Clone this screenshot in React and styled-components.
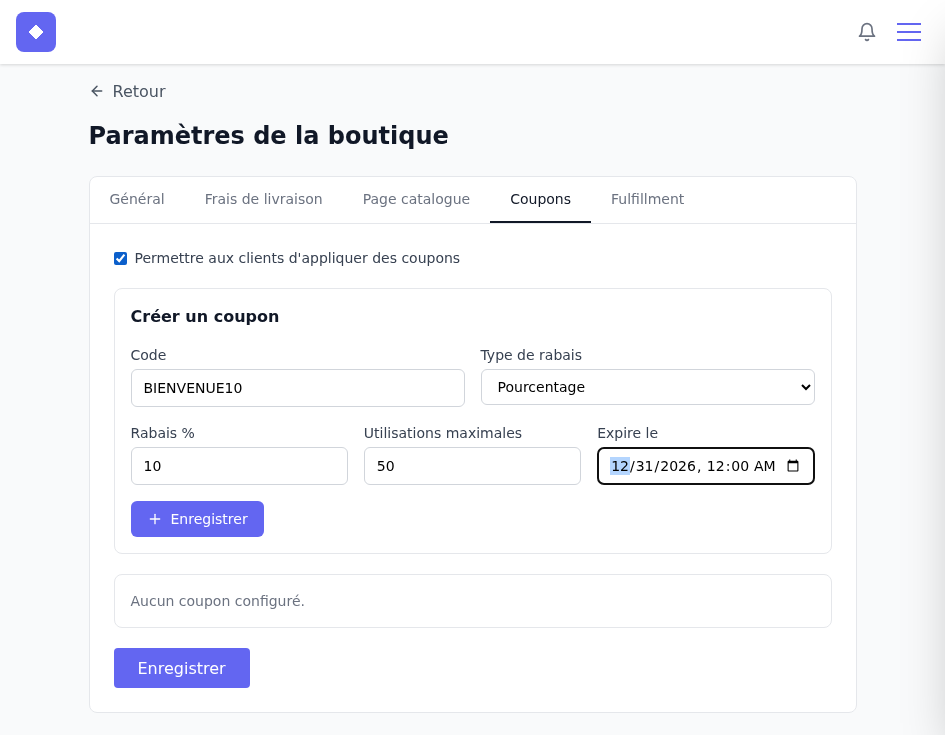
import React, { useState } from 'react';
import styled, { createGlobalStyle } from 'styled-components';
import { ArrowLeft, Plus } from 'lucide-react';
import { FiBell } from 'react-icons/fi';

const GlobalStyle = createGlobalStyle`
    * {
        box-sizing: border-box;
    }

    body {
        margin: 0;
        background: #f9fafb;
        color: #111827;
        font-family: "DejaVu Sans", sans-serif;
        overflow: hidden;
    }
`;

const TopBar = styled.header`
    height: 64px;
    padding: 12px 24px 12px 16px;
    display: flex;
    align-items: center;
    justify-content: space-between;
    background: #fff;
    box-shadow: 0 1px 3px rgba(0, 0, 0, 0.15);
`;

const Logo = styled.div`
    width: 40px;
    height: 40px;
    border-radius: 8px;
    background: #6366f1;
    display: flex;
    align-items: center;
    justify-content: center;
`;

const TopActions = styled.div`
    display: flex;
    align-items: center;
    gap: 20px;
    color: #6b7280;
`;

const Burger = styled.div`
    width: 24px;
    display: flex;
    flex-direction: column;
    gap: 6px;

    & > span {
        height: 2px;
        background: #6366f1;
    }
`;

// closed side drawer, only its shadow reaches the page
const DrawerShadow = styled.div`
    position: fixed;
    top: 0;
    right: -320px;
    z-index: 10;
    width: 320px;
    height: 100%;
    box-shadow: 0 25px 50px -12px rgba(0, 0, 0, 0.25);
`;

// own layer, text gets plain greyscale smoothing
const Page = styled.div`
    will-change: transform;
`;

const Main = styled.main`
    width: 768px;
    margin-left: 88.5px;
`;

const BackLink = styled.a`
    padding-top: 15px;
    height: 39px;
    display: flex;
    align-items: center;
    gap: 8px;
    font-size: 16px;
    color: #4b5563;
`;

const Title = styled.h1`
    margin: 17px 0 24px;
    font-size: 24px;
    line-height: 32px;
    font-weight: 700;
    color: #111827;
`;

const Card = styled.section`
    background: #fff;
    border: 1px solid #e5e7eb;
    border-radius: 8px;
`;

const Tabs = styled.nav`
    display: flex;
    height: 47px;
    border-bottom: 1px solid #e5e7eb;
`;

const Tab = styled.div`
    padding: 0 20px;
    height: 46px;
    display: flex;
    align-items: center;
    font-size: 14px;
    color: ${props => (props.$active ? '#111827' : '#6b7280')};
    border-bottom: 2px solid ${props => (props.$active ? '#111827' : 'transparent')};
`;

const CardBody = styled.div`
    padding: 24px;
`;

const CheckRow = styled.label`
    height: 20px;
    display: flex;
    align-items: center;
    gap: 8px;
    font-size: 14px;
    color: #374151;

    & > input {
        width: 13px;
        height: 13px;
        margin: 0;
        accent-color: #0b5fcb;
    }
`;

const Panel = styled.div`
    margin-top: 20px;
    padding: 16px;
    background: #fff;
    border: 1px solid #e5e7eb;
    border-radius: 8px;
`;

const PanelTitle = styled.h2`
    margin: 0 0 16px;
    font-size: 16px;
    line-height: 24px;
    font-weight: 700;
    color: #111827;
`;

const FormGrid = styled.div`
    display: grid;
    grid-template-columns: repeat(${props => props.$cols}, 1fr);
    gap: 16px;
    margin-bottom: 16px;
`;

const Field = styled.div`
    display: flex;
    flex-direction: column;
    align-items: stretch;
    min-width: 0;
`;

const Label = styled.label`
    margin-bottom: 4px;
    font-size: 14px;
    line-height: 20px;
    color: #374151;
`;

const Input = styled.input`
    width: 100%;
    height: 38px;
    padding: 0 12px;
    background: #fff;
    border: 1px solid #d1d5db;
    border-radius: 6px;
    font-family: inherit;
    font-size: 14px;
    color: #000;
`;

const DateInput = styled(Input)`
    width: calc(100% + 0.1px);

    &:focus::-webkit-datetime-edit-month-field {
        background: #b4d5fe;
        color: #000;
    }
`;

const Select = styled.select`
    width: 100%;
    height: 36px;
    padding: 0 12px;
    background: #fff;
    border: 1px solid #d1d5db;
    border-radius: 6px;
    font-family: inherit;
    font-size: 14px;
    color: #000;
`;

const Button = styled.button`
    display: inline-flex;
    align-items: center;
    justify-content: center;
    gap: 8px;
    height: ${props => (props.$large ? '40px' : '36px')};
    padding: 0 ${props => (props.$large ? '24px' : '16px')};
    background: #6366f1;
    color: #fff;
    border: 0;
    border-radius: ${props => (props.$large ? '4px' : '6px')};
    font-family: inherit;
    font-size: ${props => (props.$large ? '16px' : '14px')};
`;

const EmptyText = styled.p`
    margin: 0;
    font-size: 14px;
    line-height: 20px;
    color: #6b7280;
`;

const Footer = styled.div`
    margin-top: 20px;
`;

const tabs = ['Général', 'Frais de livraison', 'Page catalogue', 'Coupons', 'Fulfillment'];

export default function App() {
    const [code, setCode] = useState('BIENVENUE10');
    const [discount, setDiscount] = useState('10');
    const [maxUses, setMaxUses] = useState('50');
    const [expires, setExpires] = useState('2026-12-31T00:00');

    return (
        <>
            <GlobalStyle />
            <DrawerShadow />
            <Page>
                <TopBar>
                    <Logo>
                        <svg width="18" height="18" viewBox="0 0 18 18">
                            <path d="M9 2 L16 9 L9 16 L2 9 Z" fill="#fff" stroke="#fff" strokeWidth="1" strokeLinejoin="round" />
                        </svg>
                    </Logo>
                    <TopActions>
                        <FiBell size={20} />
                        <Burger>
                            <span />
                            <span />
                            <span />
                        </Burger>
                    </TopActions>
                </TopBar>
                <Main>
                    <BackLink>
                        <ArrowLeft size={16} strokeWidth={2.25} />
                        Retour
                    </BackLink>
                    <Title>Paramètres de la boutique</Title>
                    <Card>
                        <Tabs>
                            {tabs.map(tab => (
                                <Tab key={tab} $active={tab === 'Coupons'}>
                                    {tab}
                                </Tab>
                            ))}
                        </Tabs>
                        <CardBody>
                            <CheckRow>
                                <input type="checkbox" defaultChecked />
                                Permettre aux clients d'appliquer des coupons
                            </CheckRow>
                            <Panel>
                                <PanelTitle>Créer un coupon</PanelTitle>
                                <FormGrid $cols={2}>
                                    <Field>
                                        <Label>Code</Label>
                                        <Input value={code} onChange={e => setCode(e.target.value)} />
                                    </Field>
                                    <Field>
                                        <Label>Type de rabais</Label>
                                        <Select defaultValue="percent">
                                            <option value="percent">Pourcentage</option>
                                            <option value="fixed">Montant fixe</option>
                                        </Select>
                                    </Field>
                                </FormGrid>
                                <FormGrid $cols={3}>
                                    <Field>
                                        <Label>Rabais %</Label>
                                        <Input value={discount} onChange={e => setDiscount(e.target.value)} />
                                    </Field>
                                    <Field>
                                        <Label>Utilisations maximales</Label>
                                        <Input value={maxUses} onChange={e => setMaxUses(e.target.value)} />
                                    </Field>
                                    <Field>
                                        <Label>Expire le</Label>
                                        <DateInput
                                            type="datetime-local"
                                            autoFocus
                                            value={expires}
                                            onChange={e => setExpires(e.target.value)}
                                        />
                                    </Field>
                                </FormGrid>
                                <Button>
                                    <Plus size={16} />
                                    Enregistrer
                                </Button>
                            </Panel>
                            <Panel>
                                <EmptyText>Aucun coupon configuré.</EmptyText>
                            </Panel>
                            <Footer>
                                <Button $large>Enregistrer</Button>
                            </Footer>
                        </CardBody>
                    </Card>
                </Main>
            </Page>
        </>
    );
}
